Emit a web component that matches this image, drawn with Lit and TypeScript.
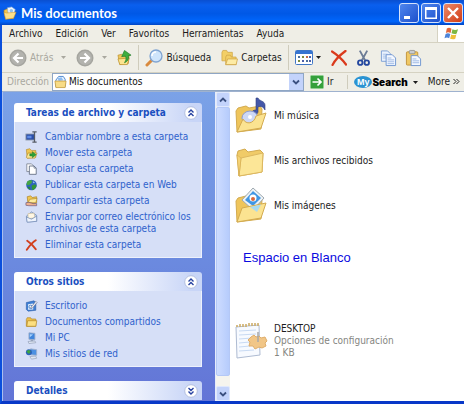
import { LitElement, html, svg, css, nothing, TemplateResult } from "lit";
import { customElement, property } from "lit/decorators.js";

type Shape = { box: string; art: TemplateResult };

const ICONS: Record<string, Shape> = {
  docs: {
    box: "0 0 16 16",
    art: svg`<path d="M1 5 L5 3 L13 6 L12 14 L3 15 Z" fill="#f3c64c" stroke="#c38a1c" stroke-width=".6"/>
      <path d="M5 2 L10 1 L14 4 L12 10 L6 9 Z" fill="#eef6ff" stroke="#7fa8d8" stroke-width=".7"/>
      <circle cx="9.500" cy="5.500" r="2" fill="#8fc1ee"/>
      <path d="M1 7 L4 8 L15 7 L12 14 L3 15 Z" fill="#fbe08a" stroke="#c9942a" stroke-width=".6"/>`,
  },
  address: {
    box: "0 0 14 14",
    art: svg`<path d="M2 5 L5 1 L10 1 L12 4 L12 12 L2 12 Z" fill="#e8f2fd" stroke="#4a86cf"/>
      <path d="M4 3 L8 2 L10 5 L5 6 Z" fill="#8fbdf0"/>
      <path d="M1 6 L13 6 L12 13 L2 13 Z" fill="#f8dc86" stroke="#c69a35" stroke-width=".8"/>`,
  },
  back: {
    box: "0 0 18 18",
    art: svg`<circle cx="9" cy="9" r="8.500" fill="#a5a59f"/><circle cx="9" cy="9" r="7" fill="#b3b3ae"/>
      <path d="M9.500 4.500 L5 9 L9.500 13.500 M5 9 H14" fill="none" stroke="#fff" stroke-width="2.200"/>`,
  },
  forward: {
    box: "0 0 18 18",
    art: svg`<circle cx="9" cy="9" r="8.500" fill="#a5a59f"/><circle cx="9" cy="9" r="7" fill="#b3b3ae"/>
      <path d="M8.500 4.500 L13 9 L8.500 13.500 M13 9 H4" fill="none" stroke="#fff" stroke-width="2.200"/>`,
  },
  up: {
    box: "0 0 16 16",
    art: svg`<path d="M1 5 L5 4 L7 6 L13 5 L12 14 L3 15 Z" fill="#eec75c" stroke="#b98d27" stroke-width=".7"/>
      <path d="M1 9 L13 8 L11 15 L3 15 Z" fill="#fbe48f" stroke="#b98d27" stroke-width=".7"/>
      <path d="M8 0 L15 5 L12 5.500 C13 9 11 12 8 13 C10 10 10 8 9 6 L5 6.500 Z" fill="#3fae3f" stroke="#1d7a24" stroke-width=".7"/>`,
  },
  search: {
    box: "0 0 18 18",
    art: svg`<path d="M2 16 L7 11" stroke="#d98a3e" stroke-width="3" stroke-linecap="round"/>
      <circle cx="11" cy="7" r="6" fill="#cfe5fb" stroke="#7fa4d2" stroke-width="1.300"/>
      <path d="M7 7 A4 4 0 0 1 11 3" fill="none" stroke="#fff" stroke-width="1.600"/>`,
  },
  folders: {
    box: "0 0 18 18",
    art: svg`<path d="M1 3 L2 1 H6 L7 3 H12 V12 H1 Z" fill="#f3cf66" stroke="#cfa548" stroke-width=".8"/>
      <path d="M5 8 L6 6 H10 L11 8 H16 V16 H5 Z" fill="#f3cf66" stroke="#cfa548" stroke-width=".8"/>
      <path d="M5 16 L7 10 H17.500 L16 16 Z" fill="#fdeba4" stroke="#cfa548" stroke-width=".8"/>`,
  },
  views: {
    box: "0 0 18 15",
    art: svg`<rect x=".5" y=".5" width="17" height="14" rx="1" fill="#fff" stroke="#3f76c6"/>
      <rect x="1" y="1" width="16" height="3" fill="#3674d1"/>
      <path d="M3 6h2v2h-2z M11 10h2v2h-2z" fill="#4a6f9c"/><path d="M7 6h2v2h-2z M3 10h2v2h-2z" fill="#7a8c3e"/>
      <path d="M11 6h2v2h-2z" fill="#c46a48"/><path d="M14 6h2v2h-2z M7 10h2v2h-2z M14 10h2v2h-2z" fill="#4d5fa8"/>`,
  },
  erase: {
    box: "0 0 16 16",
    art: svg`<path d="M1 1.500 C5 4 11 9 15 14.500 M14.500 1 C9 5 4 10 1.500 15" fill="none" stroke="#da3a1c" stroke-width="2.200" stroke-linecap="round"/>`,
  },
  cut: {
    box: "0 0 14 18",
    art: svg`<path d="M3 1 L9 12 M11 1 L5 12" stroke="#6c7c96" stroke-width="2"/>
      <circle cx="3.500" cy="14" r="2.400" fill="none" stroke="#24479f" stroke-width="2"/>
      <circle cx="10.500" cy="14" r="2.400" fill="none" stroke="#24479f" stroke-width="2"/>`,
  },
  copy: {
    box: "0 0 18 18",
    art: svg`<path d="M1.500 1.500 H8 L11 4.500 V12.500 H1.500 Z" fill="#eaf2fe" stroke="#7c9fd4"/>
      <path d="M3 5h5M3 7h5M3 9h5" stroke="#a8c0e6"/>
      <path d="M6.500 5.500 H13 L16.500 9 V17 H6.500 Z" fill="#f4f8ff" stroke="#6f95d0"/>
      <path d="M8 9h4M8 11h7M8 13h7M8 15h7" stroke="#9db9e4"/>`,
  },
  paste: {
    box: "0 0 18 18",
    art: svg`<rect x="1.500" y="2.500" width="12" height="14" rx="1" fill="#f0c865" stroke="#c1933a"/>
      <rect x="4.500" y="1" width="6" height="3.500" rx="1" fill="#c8cbd0" stroke="#8c8c86" stroke-width=".8"/>
      <path d="M6.500 6.500 H13 L16.500 10 V17 H6.500 Z" fill="#f4f8ff" stroke="#6f95d0"/>
      <path d="M8 10h4M8 12h7M8 14h7" stroke="#9db9e4"/>`,
  },
  go: {
    box: "0 0 14 14",
    art: svg`<rect x=".5" y=".5" width="13" height="13" rx="1" fill="#35a03c" stroke="#8fcf90"/>
      <path d="M2.500 7 H11 M7.500 3.500 L11 7 L7.500 10.500" fill="none" stroke="#fff" stroke-width="1.700"/>`,
  },
  flag: {
    box: "0 0 16 14",
    art: svg`<path d="M3 1 C5 0 6 0 8 1.500 L7 6 C5 5 4 5 2 6 Z" fill="#e2663a"/>
      <path d="M9 2 C11 3 12.500 3 15 2 L13.500 6.500 C12 7.500 10 7 8 6.300 Z" fill="#7eb843"/>
      <path d="M1.700 7 C3.500 6 5 6 6.700 7 L5.500 11.500 C4 10.500 2.500 10.500 .5 11.500 Z" fill="#4d84d8"/>
      <path d="M7.700 7.400 C9.500 8.300 11 8.300 13.200 7.500 L12 12 C10 13 8 12.500 6.500 12 Z" fill="#efbf3a"/>`,
  },
  rename: {
    box: "0 0 14 14",
    art: svg`<rect x=".5" y="3.500" width="10" height="7" fill="#2b4fa8" stroke="#8f99aa"/><path d="M2 5.500h5v3h-5z" fill="#5f8ce6"/>
      <path d="M8 1h5M8 13h5M10.500 1v12" fill="none" stroke="#565c66" stroke-width="1.500"/>`,
  },
  move: {
    box: "0 0 14 14",
    art: svg`<path d="M1 3 L5 2 L7 4 L12 4 V12 L2 13 Z" fill="#f0c650" stroke="#af8524" stroke-width=".7"/>
      <path d="M1 12 L3 7 H13.500 L11 13 H2 Z" fill="#fbe692" stroke="#af8524" stroke-width=".7"/>
      <path d="M5 8 H8 V5.500 L12.500 9 L8 12.500 V10.500 H5 Z" fill="#2ca237" stroke="#176f20" stroke-width=".5"/>`,
  },
  duplicate: {
    box: "0 0 14 14",
    art: svg`<path d="M1.500 1 H7 L9 3 V10 H1.500 Z" fill="#fff" stroke="#7e8797"/>
      <path d="M4.500 3.500 H10 L12.500 6 V13.200 H4.500 Z" fill="#fff" stroke="#5f6b80"/><path d="M10 3.500 V6 H12.500" fill="none" stroke="#5f6b80" stroke-width=".8"/>`,
  },
  web: {
    box: "0 0 14 14",
    art: svg`<circle cx="7" cy="7" r="6.200" fill="#2f64bd"/><path d="M2 3 C4 1 7 1 8 2 L7 5 L4 7 L1 7 Z" fill="#45a545"/>
      <path d="M7 8 L11 6 L13 8 C12 11 10 13 8 13 Z" fill="#329736"/><path d="M2 9 L5 9 L6 12 L4 12 Z" fill="#2b8a36"/><path d="M9 2.500 L11 4 L9 5 Z" fill="#a8d2ef"/>`,
  },
  share: {
    box: "0 0 14 14",
    art: svg`<path d="M2 2 L6 1 L8 3 L13 2 V9 L3 11 Z" fill="#f0c650" stroke="#a87f24" stroke-width=".8"/>
      <path d="M3 9 L5 5 L13.500 4 L12 9 Z" fill="#fceb9d" stroke="#a87f24" stroke-width=".7"/>
      <path d="M.5 9 L4 8.500 L9 10 H13 V12.500 H4 L.5 12 Z" fill="#efb08c" stroke="#5d4b74" stroke-width=".7"/>`,
  },
  mail: {
    box: "0 0 14 14",
    art: svg`<path d="M1 6 L7 1 L13 5 V12 L2 13 Z" fill="#b9cdea" stroke="#7089b4" stroke-width=".8"/>
      <path d="M3 3 L10 2.500 L11 8 L3 9 Z" fill="#fff7e4" stroke="#c8b48a" stroke-width=".6"/>
      <path d="M1 7 L7 9.500 L13 6 V12 L2 13 Z" fill="#eef4fd" stroke="#7089b4" stroke-width=".8"/>`,
  },
  remove: {
    box: "0 0 14 14",
    art: svg`<path d="M2 2 C5 4 10 9 12 12 M12 1.500 C8 4 4 9 1.500 12.500" fill="none" stroke="#d2401f" stroke-width="2.300" stroke-linecap="round"/>`,
  },
  desktop: {
    box: "0 0 14 14",
    art: svg`<path d="M1 3 L10 1 L12 3 V12 L3 13 L1 11 Z" fill="#3f7fd4" stroke="#2a5da8" stroke-width=".7"/>
      <path d="M3 5 L9 4 V11 L3 11.500 Z" fill="#e8f1fc"/><circle cx="6" cy="8" r="2" fill="none" stroke="#3b78c8"/>
      <path d="M6 9 L12 1.500 L13.500 3 L8 9.500 Z" fill="#e9eef7" stroke="#5d5a72" stroke-width=".6"/>`,
  },
  shared: {
    box: "0 0 14 14",
    art: svg`<path d="M1 4 L2 2 H6 L7 3.500 H12 V12 H1 Z" fill="#eebf49" stroke="#b3892b" stroke-width=".8"/>
      <path d="M1.500 12 L2.500 5.500 H13.200 L12 12 Z" fill="#fcdf80" stroke="#b3892b" stroke-width=".8"/>`,
  },
  computer: {
    box: "0 0 14 14",
    art: svg`<path d="M4 1 L11 1.500 V9 L4 8.500 Z" fill="#3f85dd" stroke="#9fb0ca"/>
      <path d="M5 2.500 L9 3 L5 6 Z" fill="#a9d2fb"/><path d="M6 9 H9 V11 H6 Z" fill="#98a5bb"/>
      <path d="M3 11 L11 10.500 L12 12.500 L4 13.500 Z" fill="#dfe6f2" stroke="#8c99b2" stroke-width=".7"/>`,
  },
  network: {
    box: "0 0 14 14",
    art: svg`<path d="M6 1 L13 2 V8.500 L6 8 Z" fill="#4c90e2" stroke="#9fb0ca"/>
      <circle cx="4" cy="5" r="3.500" fill="#2c62ba"/><path d="M1 4 L4 2 L6 4 L4 7 Z" fill="#3ca540"/>
      <path d="M5 10 L12 9.500 L13 12 L7 13 Z" fill="#dfe6f2" stroke="#8c99b2" stroke-width=".7"/>`,
  },
  music: {
    box: "0 0 34 38",
    art: svg`<path d="M2 14 L4 11 L12 9 L15 11 L26 9 L28 12 L27 32 L3 35 Z" fill="#efc55b" stroke="#d3ab50"/>
      <path d="M22 1 H24 C25 4 31 4 31 8 V13 C29 9 26 9 24 10 V15 C23 19 17 19 18 15 C19 13 21 13 22 13 Z" fill="#4457a8" stroke="#33427f" stroke-width=".6"/>
      <ellipse cx="16" cy="21" rx="8" ry="7" fill="#cdd8f6" stroke="#8d9bd0"/><ellipse cx="16" cy="20" rx="2" ry="2" fill="#fff"/>
      <path d="M3 35 L9 22 C12 28 20 27 22 19 L32 16 L27 31 Z" fill="#fbe391" stroke="#d3ab50"/>`,
  },
  folder: {
    box: "0 0 34 38",
    art: svg`<path d="M3 13 L4 9 L11 7 L14 10 L26 8 L29 11 L28 30 L5 34 Z" fill="#f0cb68" stroke="#d3ab50"/>
      <path d="M7 16 L29 11 L28 30 L5 34 Z" fill="#fce697" stroke="#ddb860"/><path d="M3 13 L7 16 L5 34 Z" fill="#f6d477" stroke="#d3ab50" stroke-width=".6"/>`,
  },
  pictures: {
    box: "0 0 34 38",
    art: svg`<path d="M2 14 L4 11 L12 9 L15 11 L26 9 L28 12 L27 32 L3 35 Z" fill="#efc55b" stroke="#d3ab50"/>
      <path d="M19 1 L30 11 L19 23 L8 13 Z" fill="#eef3f6" stroke="#9fa9b0"/>
      <path d="M19 4 L27 11 L19 19 L11 13 Z" fill="#4096e4"/><circle cx="19" cy="11" r="3.500" fill="#fff"/><circle cx="19" cy="12" r="2" fill="#d8683e"/>
      <path d="M3 35 L8 21 L32 16 L27 31 Z" fill="#fbe391" stroke="#d3ab50"/><path d="M16 20 L27 17.500 L23 25 Z" fill="#a9daf0"/>`,
  },
  config: {
    box: "0 0 34 38",
    art: svg`<path d="M2 5 L25 3 L26 33 L3 36 Z" fill="#f7faff" stroke="#aebbd2"/>
      <path d="M5 9L22 8M5 13L22 12M5 17L18 16M5 21L16 20M5 25L16 24M5 29L20 28" stroke="#c8daf3"/>
      <path d="M3 5v-2M6 5v-3M9 5v-3M12 5v-3M15 4v-3M18 4v-3M21 4v-3M24 4v-3" stroke="#cfae6a" stroke-width="1.600"/>
      <path d="M17 15 L20 13 L22 15 L25 14 L27 16 L31 15 L33 19 L31 21 L32 24 L28 26 L25 25 L21 27 L19 24 L15 24 L16 20 L14 18 Z" fill="#f1c687" stroke="#dfae6c"/>
      <path d="M24 10 V20" stroke="#a7a7a7" stroke-width="1.500"/>`,
  },
};

function icon(name: string, w: number, h: number) {
  return html`<svg width=${w} height=${h} viewBox=${ICONS[name].box} aria-hidden="true">${ICONS[name].art}</svg>`;
}

const shared = css`
  * { box-sizing: border-box; }
  svg { display: block; flex: none; }
  button { font: inherit; color: inherit; background: none; border: 0; padding: 0; margin: 0; }
`;

@customElement("task-panel")
class TaskPanel extends LitElement {
  @property() heading = "";
  @property({ type: Boolean }) collapsed = false;
  @property({ attribute: false }) items: [string, string][] = [];

  static styles = [shared, css`
    :host { display: block; }
    .head {
      display: flex; align-items: center; width: 100%; height: 19px; padding: 0 4px 0 12px;
      border-radius: 3px 3px 0 0; text-align: left; color: #1a4fc0;
      background: linear-gradient(90deg, #fff 50%, #c8d5f7 95%);
      font: bold 10px/19px "DejaVu Sans Condensed", "DejaVu Sans", sans-serif;
    }
    .label { flex: 1; white-space: nowrap; }
    .list {
      display: flex; flex-direction: column; gap: 4px; list-style: none; margin: 0;
      padding: 9px 4px 6px 10px; background: #d6dff7; border: 1px solid #edf1fc; border-top: 0;
    }
    .item { display: flex; gap: 7px; line-height: 12px; }
    .item svg { height: 12px; overflow: visible; }
    .link { color: #2f62cc; text-decoration: none; }
  `];

  render() {
    return html`
      <button class="head" aria-expanded=${this.collapsed ? "false" : "true"}>
        <span class="label">${this.heading}</span>
        <svg width="14" height="14" viewBox="0 0 14 14" aria-hidden="true">
          <circle cx="7" cy="7" r="6.300" fill="#fff" stroke="#b3bfdf" />
          <path d=${this.collapsed ? "M4.500 4 L7 6.500 L9.500 4 M4.500 7.500 L7 10 L9.500 7.500" : "M4.500 6.500 L7 4 L9.500 6.500 M4.500 10 L7 7.500 L9.500 10"}
            fill="none" stroke="#2742a0" stroke-width="1.400" />
        </svg>
      </button>
      ${this.collapsed ? nothing : html`<ul class="list">
        ${this.items.map(([name, text]) => html`<li class="item">${icon(name, 13, 13)}<a class="link" href="#">${text}</a></li>`)}
      </ul>`}`;
  }
}

const MENUS = ["Archivo", "Edición", "Ver", "Favoritos", "Herramientas", "Ayuda"];
const TASKS: [string, string][] = [
  ["rename", "Cambiar nombre a esta carpeta"],
  ["move", "Mover esta carpeta"],
  ["duplicate", "Copiar esta carpeta"],
  ["web", "Publicar esta carpeta en Web"],
  ["share", "Compartir esta carpeta"],
  ["mail", "Enviar por correo electrónico los archivos de esta carpeta"],
  ["remove", "Eliminar esta carpeta"],
];
const PLACES: [string, string][] = [
  ["desktop", "Escritorio"],
  ["shared", "Documentos compartidos"],
  ["computer", "Mi PC"],
  ["network", "Mis sitios de red"],
];
const FOLDERS = [["music", "Mi música"], ["folder", "Mis archivos recibidos"], ["pictures", "Mis imágenes"]];

@customElement("app-root")
class AppRoot extends LitElement {
  static styles = [shared, css`
    :host {
      display: flex; flex-direction: column; height: 100vh; overflow: hidden;
      background: #efeee6; color: #1c1c1c;
      font: 10px/14px "DejaVu Sans Condensed", "DejaVu Sans", sans-serif;
    }
    .title {
      flex: none; display: flex; align-items: center; gap: 4px; height: 25px; padding: 0 1px 0 3px;
      background: linear-gradient(#0a4fd0, #0a5fee 20%, #0058e6 55%, #0066fc 85%, #0045c4);
    }
    .name { flex: 1; margin: 0; color: #fff; font: bold 13px/20px Lato, "Noto Sans", sans-serif; }
    .controls { display: flex; gap: 2px; }
    .ctl {
      display: grid; place-items: center; width: 20px; height: 20px; border: 1px solid #d5e2fb; border-radius: 3px;
      background: linear-gradient(135deg, #4f86ee, #1c50cc);
    }
    .close { background: linear-gradient(135deg, #ee8a68, #d03c16); }
    .frame { flex: 1; min-height: 0; display: flex; flex-direction: column; border-left: 2px solid #0a4fdc; border-bottom: 3px solid #0838c8; }
    .menu { flex: none; display: flex; align-items: stretch; height: 18px; padding-left: 7px; border-bottom: 1px solid #d5d2c2; }
    .menus { flex: 1; display: flex; gap: 13px; align-items: center; }
    .brand { display: grid; place-items: center; width: 27px; background: #fff; border-left: 1px solid #d5d2c2; }
    .tools { flex: none; display: flex; align-items: center; height: 30px; padding-left: 7px; border-bottom: 1px solid #d5d2c2; }
    .tool { display: flex; align-items: center; gap: 3px; }
    .dim { color: #a9a89f; }
    .rule { width: 1px; align-self: stretch; margin: 2px 6px; background: #cfccbc; }
    .far { margin-left: 14px; }
    .wide { margin-left: 10px; }
    .snug { margin-left: 8px; }
    .close-by { margin-left: 5px; }
    .address { flex: none; display: flex; align-items: center; height: 18px; padding: 0 4px 0 5px; }
    .combo { flex: 1; position: relative; display: flex; align-items: center; height: 18px; margin: 0 6px 0 3px; padding-left: 1px; background: #fff; border: 1px solid #8fa6c4; }
    .pick { flex: 1; min-width: 0; height: 16px; appearance: none; border: 0; background: none; padding: 0 0 0 2px; font: inherit; color: #111; }
    .drop { position: absolute; right: 0; top: 0; bottom: 0; width: 14px; display: grid; place-items: center; background: #c3d3fb; pointer-events: none; }
    .my { display: grid; place-items: center; width: 18px; height: 12px; border-radius: 50%; background: #2b93d2; color: #fff; font: bold 9px/12px "Liberation Sans", sans-serif; }
    .search { font: 900 10px/14px Inter, "Liberation Sans", sans-serif; color: #000; }
    .logo { gap: 0; }
    .body { flex: 1; min-height: 0; display: flex; border-top: 1px solid #9fb2cf; background: #fff; }
    .side { flex: none; width: 213px; overflow: hidden; display: flex; flex-direction: column; gap: 14px; padding: 11px 13px 0 11px;
      background: linear-gradient(#7ba2e7, #6c8ce0 50%, #6375d6); border-left: 1px solid #a8bff0; }
    .scroll { flex: none; width: 15px; display: flex; flex-direction: column; background: #f5f4ee; border-left: 1px solid #e6ecfb; }
    .step { display: grid; place-items: center; height: 15px; background: #c3d3fb; border: 1px solid #dfe8fd; border-radius: 2px; }
    .thumb { flex: 1; margin-bottom: 10px; background: linear-gradient(90deg, #cddcff, #b6ccfc); border: 1px solid #b4c8f6; border-radius: 2px; }
    .files { flex: 1; min-width: 0; padding: 5px 0 0 4px; }
    .file { display: flex; align-items: center; gap: 6px; height: 38px; margin-bottom: 7px; }
    .note { margin: 23px 0 54px 9px; color: #0a0ae0; font: 13px/20px "Liberation Sans", sans-serif; }
    .meta { display: flex; flex-direction: column; line-height: 12px; color: #85857f; }
    .file-name { color: #1c1c1c; }
  `];

  render() {
    const caret = html`<svg width="5" height="3" viewBox="0 0 5 3" aria-hidden="true"><path d="M0 0H5L2.500 3Z" fill="currentColor" /></svg>`;
    const chevron = (d: string) => html`<svg width="8" height="8" viewBox="0 0 8 8" aria-hidden="true"><path d=${d} fill="none" stroke="#3b5080" stroke-width="1.800" /></svg>`;
    return html`
      <header class="title">
        ${icon("docs", 14, 16)}
        <h1 class="name">Mis documentos</h1>
        <div class="controls">
          <button class="ctl" aria-label="Minimizar"><svg width="14" height="14"><path d="M2 10h6v3h-6z" fill="#fff" /></svg></button>
          <button class="ctl" aria-label="Maximizar"><svg width="14" height="14"><path d="M1 1h12v12h-12z M2.500 4v7.500h9v-7.500z" fill="#fff" fill-rule="evenodd" /></svg></button>
          <button class="ctl close" aria-label="Cerrar"><svg width="14" height="14"><path d="M2 2L12 12M12 2L2 12" stroke="#fff" stroke-width="2.400" /></svg></button>
        </div>
      </header>
      <div class="frame">
        <nav class="menu">
          <div class="menus">${MENUS.map((m) => html`<button>${m}</button>`)}</div>
          <div class="brand">${icon("flag", 15, 14)}</div>
        </nav>
        <div class="tools">
          <button class="tool dim">${icon("back", 18, 18)}Atrás</button>
          <button class="tool dim snug" aria-label="Historial atrás">${caret}</button>
          <button class="tool wide" aria-label="Adelante">${icon("forward", 18, 18)}</button>
          <button class="tool dim snug" aria-label="Historial adelante">${caret}</button>
          <button class="tool wide" aria-label="Arriba">${icon("up", 15, 16)}</button>
          <span class="rule"></span>
          <button class="tool">${icon("search", 18, 18)}Búsqueda</button>
          <button class="tool wide">${icon("folders", 17, 18)}Carpetas</button>
          <span class="rule"></span>
          <button class="tool" aria-label="Vistas">${icon("views", 18, 15)}${caret}</button>
          <button class="tool wide" aria-label="Eliminar">${icon("erase", 16, 16)}</button>
          <button class="tool wide" aria-label="Cortar">${icon("cut", 13, 18)}</button>
          <button class="tool wide" aria-label="Copiar">${icon("copy", 17, 18)}</button>
          <button class="tool snug" aria-label="Pegar">${icon("paste", 17, 18)}</button>
        </div>
        <div class="address">
          <label class="dim" for="place">Dirección</label>
          <div class="combo">
            ${icon("address", 13, 14)}
            <select class="pick" id="place"><option>Mis documentos</option></select>
            <span class="drop">${chevron("M1 2.500L4 5.500L7 2.500")}</span>
          </div>
          <button class="tool">${icon("go", 14, 14)}Ir</button>
          <span class="rule far"></span>
          <button class="tool logo"><span class="my">My</span><span class="search">Search</span></button>
          <button class="tool close-by" aria-label="Opciones de búsqueda">${caret}</button>
          <button class="tool wide">More<svg width="7" height="8" viewBox="0 0 7 8"><path d="M.5 1L3 3.500L.5 6M3.500 1L6 3.500L3.500 6" fill="none" stroke="#222" /></svg></button>
        </div>
        <div class="body">
          <aside class="side">
            <task-panel heading="Tareas de archivo y carpeta" .items=${TASKS}></task-panel>
            <task-panel heading="Otros sitios" .items=${PLACES}></task-panel>
            <task-panel heading="Detalles" collapsed></task-panel>
          </aside>
          <div class="scroll">
            <button class="step" aria-label="Subir">${chevron("M1 5.500L4 2.500L7 5.500")}</button>
            <div class="thumb"></div>
            <button class="step" aria-label="Bajar">${chevron("M1 2.500L4 5.500L7 2.500")}</button>
          </div>
          <main class="files">
            ${FOLDERS.map(([name, text]) => html`<div class="file">${icon(name, 34, 38)}<span>${text}</span></div>`)}
            <p class="note">Espacio en Blanco</p>
            <div class="file">
              ${icon("config", 34, 38)}
              <div class="meta"><span class="file-name">DESKTOP</span><span>Opciones de configuración</span><span>1 KB</span></div>
            </div>
          </main>
        </div>
      </div>`;
  }
}
